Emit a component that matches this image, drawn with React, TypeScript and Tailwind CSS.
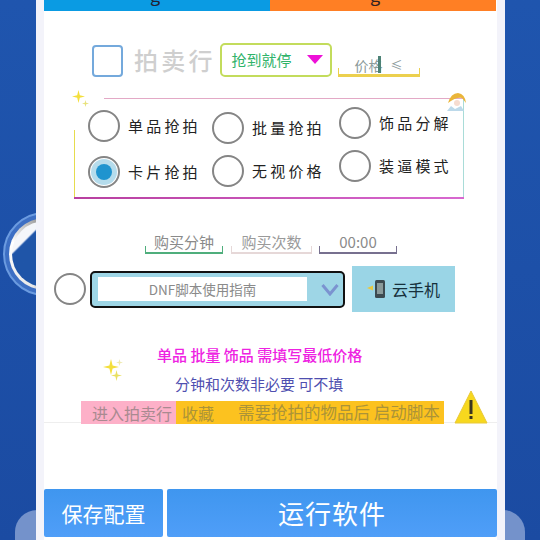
import React from "react";

const font = "[font-family:'Noto_Sans_CJK_SC','Liberation_Sans',sans-serif]";

function Radio({ checked = false }: { checked?: boolean }) {
  return (
    <div className="w-[32px] h-[32px] shrink-0 rounded-full border-[2px] border-[#858585] bg-white flex items-center justify-center">
      {checked && (
        <div className="w-[26px] h-[26px] rounded-full bg-[#b5dcec] flex items-center justify-center">
          <div className="w-[16px] h-[16px] rounded-full bg-[#1f94cf]" />
        </div>
      )}
    </div>
  );
}

function Option({ label, checked }: { label: string; checked?: boolean }) {
  return (
    <div className="flex items-center gap-[8px] w-[125px]">
      <Radio checked={checked} />
      <span className="text-[15px] leading-[20px] tracking-[3.2px] text-[#222] whitespace-nowrap">{label}</span>
    </div>
  );
}

function Sparkle({ size, color, className }: { size: number; color: string; className?: string }) {
  return (
    <svg width={size} height={size} viewBox="0 0 20 20" className={className}>
      <path d="M10 0 L12 8 L20 10 L12 12 L10 20 L8 12 L0 10 L8 8 Z" fill={color} />
    </svg>
  );
}

function Field({ label, w, bar, tick, text }: { label: string; w: string; bar: string; tick: string; text: string }) {
  return (
    <div className={`relative ${w} h-[20px] border-b-[2px] ${bar} flex items-end justify-center`}>
      <span className={`text-[15px] leading-[20px] ${text}`}>{label}</span>
      <span className={`absolute left-0 bottom-0 w-[1px] h-[6px] ${tick}`} />
      <span className={`absolute right-0 bottom-0 w-[1px] h-[6px] ${tick}`} />
    </div>
  );
}

export default function App() {
  return (
    <div className={`relative w-[540px] h-[540px] overflow-hidden bg-gradient-to-b from-[#1f55ae] to-[#1b4ba2] ${font}`}>
      {/* decorative background */}
      <div className="absolute left-[15px] top-[510px] w-[60px] h-[60px] rounded-[22px] bg-[#7492cb]" />
      <div className="absolute left-[465px] top-[510px] w-[60px] h-[60px] rounded-[22px] bg-[#7492cb]" />
      <div className="absolute left-[3px] top-[212px] w-[84px] h-[84px] rounded-full bg-[#3d6fc4] border-[2px] border-[#6b9be0] flex items-center justify-center">
        <div className="w-[72px] h-[72px] rounded-full bg-[conic-gradient(from_200deg,#e8e8e8,#ffffff_90deg,#999_150deg,#111_200deg,#111_300deg,#e8e8e8)] flex items-center justify-center">
          <div className="w-[66px] h-[66px] rounded-full bg-gradient-to-br from-[#f4f6fa] from-[24%] to-[#1f55a8] to-[26%]" />
        </div>
      </div>

      <div className="absolute left-[36px] top-0 w-[469px] h-[540px] bg-[#f3f3fa] px-[8px]">
        <div className="relative h-full bg-white flex flex-col">
          {/* tabs */}
          <div className="flex h-[11px] shrink-0 overflow-hidden">
            <div className="w-[226px] bg-[#0a9be3] flex justify-center"><span className="text-[18px] leading-[18px] -mt-[15px] ml-[-4px] text-[#223]">g</span></div>
            <div className="w-[226px] bg-[#ff7f24] flex justify-center"><span className="text-[18px] leading-[18px] -mt-[15px] ml-[-16px] text-[#322]">g</span></div>
          </div>

          {/* top controls */}
          <div className="flex items-start ml-[48px] mt-[32px] h-[34px]">
            <div className="w-[31px] h-[32px] mt-[2px] rounded-[4px] border-[2px] border-[#74a9dc] bg-white" />
            <span className="ml-[11px] mt-[1px] text-[24px] leading-[32px] tracking-[3.2px] text-[#cfcfcf] font-medium whitespace-nowrap">拍卖行</span>
            <div className="ml-[4px] w-[112px] h-[34px] rounded-[5px] border-[2px] border-[#c3dc5c] flex items-center pl-[10px] pr-[6px] justify-between">
              <span className="text-[15px] text-[#2fb36a] whitespace-nowrap">抢到就停</span>
              <span className="w-0 h-0 border-l-[8px] border-r-[8px] border-t-[9px] border-l-transparent border-r-transparent border-t-[#ee10d8] mr-[1px] -mt-[2px]" />
            </div>
            <div className="relative ml-[6px] mt-[14px] w-[82px] h-[20px] border-b-[3px] border-[#ecd04e] flex items-end pl-[17px]">
              <span className="text-[14px] leading-[18px] text-[#8b9a9a] whitespace-nowrap">价格</span>
              <span className="ml-[8px] text-[12px] leading-[18px] text-[#8b9a9a]">≤</span>
              <span className="absolute left-[40px] top-[-1px] w-[3px] h-[17px] bg-[#4d8276]" />
              <span className="absolute left-0 bottom-0 w-[1px] h-[6px] bg-[#ecd04e]" />
              <span className="absolute right-0 bottom-0 w-[1px] h-[6px] bg-[#ecd04e]" />
            </div>
          </div>

          {/* option box */}
          <div className="relative ml-[30px] mt-[21px] w-[390px] h-[101px] shrink-0">
            <div className="absolute left-[30px] right-0 top-0 h-[1px] bg-[#e3a9c6]" />
            <div className="absolute left-0 top-[32px] bottom-0 w-[1px] bg-[#e6dc4e]" />
            <div className="absolute right-0 top-0 bottom-0 w-[1px] bg-[#a9dcd8]" />
            <div className="absolute left-0 right-0 bottom-0 h-[2px] bg-gradient-to-r from-[#b83fa0] to-[#d868d0]" />
            <Sparkle size={13} color="#f4df3c" className="absolute left-[-2px] top-[-8px]" />
            <Sparkle size={7} color="#e8e27c" className="absolute left-[8px] top-[2px]" />
            <svg width="20" height="20" viewBox="0 0 20 20" className="absolute right-[-2px] top-[-6px]">
              <path d="M2 11 Q5 1 12 1 Q19 2 20 11 L16 6 Q10 5 2 11 Z" fill="#eab53a" />
              <circle cx="11" cy="11" r="3" fill="#f6dcd0" />
              <path d="M1 19 L5 14 L9 17 L15 14 L18 19 Z" fill="#bcd9ea" />
            </svg>
            <div className="absolute inset-0 flex">
              <div className="flex flex-col ml-[14px] mt-[12px] gap-[14px] w-[124px]">
                <Option label="单品抢拍" />
                <Option label="卡片抢拍" checked />
              </div>
              <div className="flex flex-col mt-[14px] gap-[11px] w-[127px]">
                <Option label="批量抢拍" />
                <Option label="无视价格" />
              </div>
              <div className="flex flex-col mt-[9px] gap-[11px]">
                <Option label="饰品分解" />
                <Option label="装逼模式" />
              </div>
            </div>
          </div>

          {/* fields */}
          <div className="flex ml-[101px] mt-[35px]">
            <Field label="购买分钟" w="w-[78px]" bar="border-[#4fae7c]" tick="bg-[#4fae7c]" text="text-[#8a8a8a]" />
            <div className="ml-[8px]"><Field label="购买次数" w="w-[81px]" bar="border-[#e6d8d8]" tick="bg-[#e6d8d8]" text="text-[#9a9a9a]" /></div>
            <div className="ml-[7px]"><Field label="00:00" w="w-[78px]" bar="border-[#77708f]" tick="bg-[#77708f]" text="text-[#8a8a8a]" /></div>
          </div>

          {/* picker row */}
          <div className="flex items-center ml-[10px] mt-[12px] h-[46px]">
            <Radio />
            <div className="ml-[4px] w-[255px] h-[37px] rounded-[5px] border-[2px] border-[#111] bg-[#9ed6e6] flex items-center pl-[6px]">
              <div className="w-[209px] h-[24px] bg-white flex items-center justify-center">
                <span className="text-[13.5px] text-[#8a8a8a] whitespace-nowrap">DNF脚本使用指南</span>
              </div>
              <div className="flex-1 flex justify-end pr-[4px]">
                <svg width="18" height="13" viewBox="0 0 18 13">
                  <path d="M1.5 2 L9 11 L16.5 2" fill="none" stroke="#7b93d0" strokeWidth="3" />
                </svg>
              </div>
            </div>
            <div className="ml-[7px] w-[103px] h-[46px] bg-[#9ad5e6] flex items-center justify-center gap-[3px]">
              <svg width="22" height="20" viewBox="0 0 22 20">
                <path d="M0 9 L6 6.5 L6 11.5 Z" fill="#e8c840" />
                <rect x="8" y="1" width="10" height="18" rx="1.5" fill="#3c4a50" />
                <rect x="10" y="4" width="6" height="11" fill="#8a9a9a" />
              </svg>
              <span className="text-[16px] text-[#16303c] whitespace-nowrap">云手机</span>
            </div>
          </div>

          {/* notes */}
          <div className="relative mt-[33px] flex flex-col">
            <Sparkle size={16} color="#f4df3c" className="absolute left-[59px] top-[14px]" />
            <Sparkle size={11} color="#e9e060" className="absolute left-[67px] top-[25px]" />
            <Sparkle size={7} color="#efeab0" className="absolute left-[72px] top-[14px]" />
            <span className="ml-[113px] text-[15px] leading-[20px] font-medium text-[#ee22e2] whitespace-nowrap">单品 批量 饰品 需填写最低价格</span>
            <span className="ml-[131px] mt-[9px] text-[15px] leading-[20px] text-[#4f4fb0] whitespace-nowrap">分钟和次数非必要 可不填</span>
            <div className="relative z-10 flex items-end -mt-[4px] ml-[37px]">
              <div className="w-[95px] h-[23px] bg-[#fdb0c8] flex items-center justify-end pr-[4px]">
                <span className="text-[16px] text-[#a98a90] whitespace-nowrap">进入拍卖行</span>
              </div>
              <div className="w-[268px] h-[23px] bg-[#fcc21f] flex items-center pl-[6px] gap-[24px]">
                <span className="text-[16px] text-[#ab9338] whitespace-nowrap">收藏</span>
                <span className="text-[16.5px] text-[#ab9338] whitespace-nowrap">需要抢拍的物品后 启动脚本</span>
              </div>
              <svg width="34" height="34" viewBox="0 0 34 34" className="ml-[10px]">
                <path d="M17 1 L33 33 L1 33 Z" fill="#f7d81e" stroke="#e8c838" strokeWidth="1" strokeLinejoin="round" />
                <rect x="15.5" y="10" width="3" height="14" fill="#3a3520" />
                <rect x="15.5" y="26" width="3" height="3" fill="#3a3520" />
              </svg>
            </div>
            <div className="h-[1px] bg-[#eeeeee] -mt-[2px]" />
          </div>

          {/* footer */}
          <div className="flex gap-[4px] mt-auto mb-[3px]">
            <button className="w-[119px] h-[48px] rounded-[2px] bg-gradient-to-b from-[#3f96ef] to-[#4f9ef8] text-white text-[21px] leading-none">保存配置</button>
            <button className="w-[330px] h-[48px] rounded-[2px] bg-gradient-to-b from-[#3f96ef] to-[#4f9ef8] text-white text-[26px] tracking-[1px] leading-none">运行软件</button>
          </div>
        </div>
      </div>
    </div>
  );
}
